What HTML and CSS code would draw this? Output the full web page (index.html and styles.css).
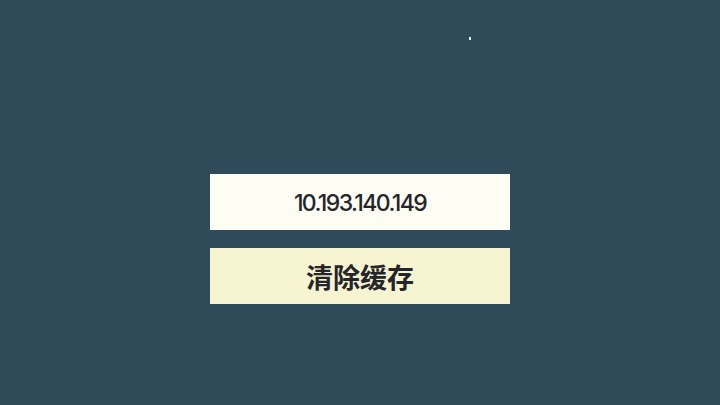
FILE: index.html
```
<!DOCTYPE html>
<html lang="zh">
<head>
<meta charset="utf-8">
<title>设置</title>
<link rel="stylesheet" href="styles.css">
</head>
<body>
<div class="screen">
  <div class="cursor"></div>
  <div class="panel">
    <div class="btn btn-ip">10.193.140.149</div>
    <div class="btn btn-clear">清除缓存</div>
  </div>
</div>
</body>
</html>
```
FILE: styles.css
```
html, body {
  margin: 0;
  padding: 0;
}
body {
  width: 720px;
  height: 405px;
  overflow: hidden;
  background: #2f4b59;
}
.screen {
  position: relative;
  width: 720px;
  height: 405px;
  display: flex;
  flex-direction: column;
  align-items: center;
  padding-top: 174px;
  box-sizing: border-box;
}
.panel {
  display: flex;
  flex-direction: column;
  gap: 18px;
}
.btn {
  width: 300px;
  height: 56px;
  display: flex;
  align-items: center;
  justify-content: center;
  color: #25252a;
}
.btn-ip {
  background: #fdfdf4;
  font-family: Inter, "Noto Sans", sans-serif;
  font-size: 23px;
  letter-spacing: -1.6px;
  font-weight: 500;
  padding-top: 1px;
  box-sizing: border-box;
}
.btn-clear {
  background: #f7f4d2;
  font-family: "Noto Sans CJK SC", sans-serif;
  font-size: 27px;
  font-weight: 700;
}
.cursor {
  position: absolute;
  left: 469px;
  top: 37px;
  width: 2px;
  height: 3px;
  background: #e8eef0;
}
```
